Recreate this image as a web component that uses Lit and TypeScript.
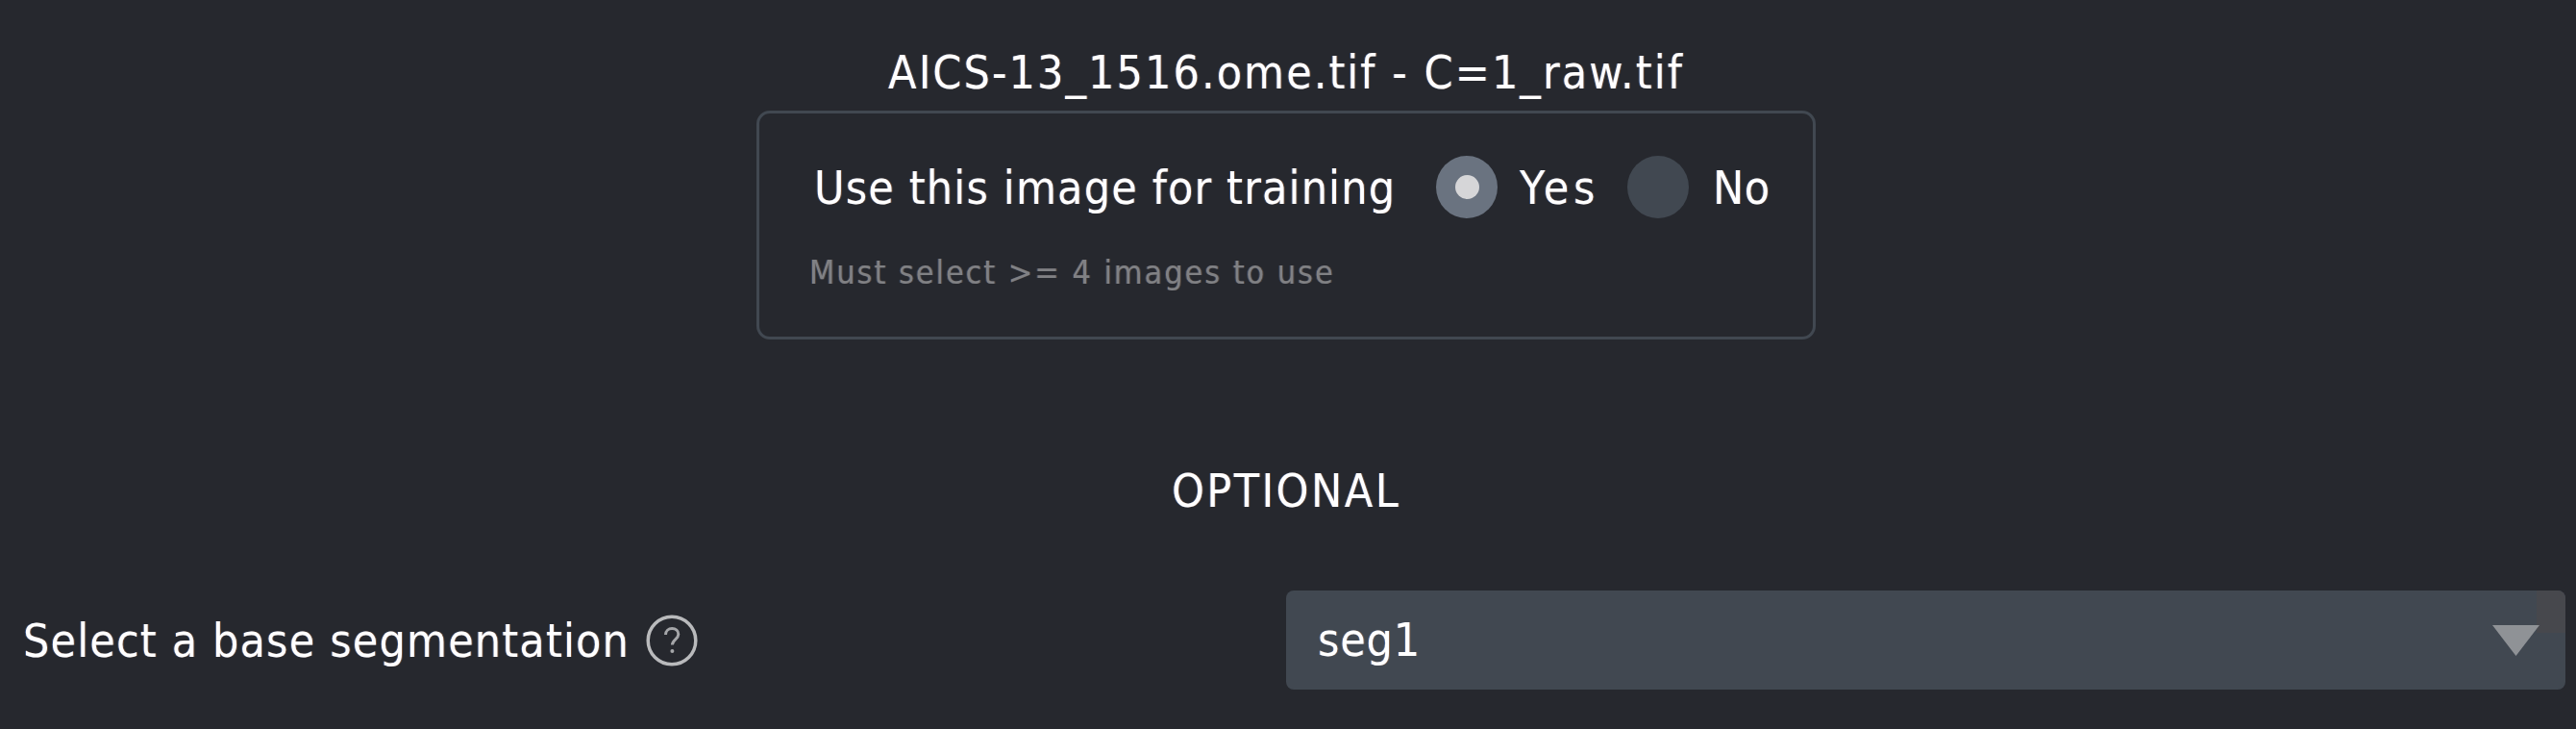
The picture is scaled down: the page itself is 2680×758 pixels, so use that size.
import { LitElement, html, css } from "lit";
import { customElement } from "lit/decorators.js";

@customElement("app-root")
export class AppRoot extends LitElement {
  static styles = css`
    :host {
      display: block;
      height: 758px;
      overflow: hidden;
      background: #26282e;
      color: #ffffff;
      font-family: "DejaVu Sans", "Noto Sans", sans-serif;
      font-stretch: condensed;
      font-size: 48px;
    }
    .txt {
      filter: blur(0.7px);
      white-space: nowrap;
      text-shadow: 1px 0 rgba(225, 140, 70, 0.4), -1px 0 rgba(80, 140, 240, 0.4);
    }
    .page { display: flex; flex-direction: column; height: 100%; box-sizing: border-box; padding-top: 43px; }
    .title { text-align: center; line-height: 64px; height: 72px; margin-right: 4px; letter-spacing: 2px; }
    .card {
      align-self: flex-start;
      margin-left: 787px;
      width: 1102px;
      height: 238px;
      box-sizing: border-box;
      border: 3px solid #414851;
      border-radius: 14px;
      padding: 44px 42px 0 57px;
    }
    .line { display: flex; align-items: center; height: 65px; }
    .question { width: 647px; letter-spacing: 1.1px; }
    .radio {
      width: 64px; height: 65px; border-radius: 50%;
      background: #414851;
      display: flex; align-items: center; justify-content: center;
      flex: none;
    }
    .radio.on { background: #6a7380; }
    .dot { width: 25px; height: 25px; border-radius: 50%; background: #d6d6d8; }
    .yes { margin-left: 23px; width: 112px; letter-spacing: 4.7px; }
    .no { margin-left: 25px; letter-spacing: 0.5px; }
    .hint {
      margin: 35px 0 0 -5px;
      font-size: 34px;
      line-height: 42px;
      color: #808184;
      letter-spacing: 1.9px;
      text-shadow: 1px 0 rgba(180, 130, 80, 0.3), -1px 0 rgba(80, 120, 190, 0.3);
    }
    .optional { margin-top: 129px; text-align: center; line-height: 56px; margin-right: 4px; letter-spacing: 2.4px; }
    .row { display: flex; align-items: center; margin-top: 76px; padding-left: 24px; padding-right: 11px; }
    .label { width: 648px; letter-spacing: 1.1px; }
    .help { width: 54px; height: 54px; display: block; flex: none; filter: blur(0.6px); }
    .select {
      position: relative;
      margin-left: auto;
      width: 1331px;
      height: 103px;
      box-sizing: border-box;
      background: #414851;
      border-radius: 8px;
      padding-left: 33px;
      line-height: 102px;
      display: block;
      letter-spacing: 0.75px;
    }
    .patch {
      position: absolute; top: 0; right: 0; width: 30px; height: 44px;
      background: #47484d; border-top-right-radius: 8px;
    }
    .arrow {
      position: absolute; left: 1255px; top: 36px; width: 49px; height: 32px; display: block;
    }
  `;

  render() {
    return html`
      <div class="page">
        <div class="title txt">AICS-13_1516.ome.tif - C=1_raw.tif</div>
        <div class="card">
          <div class="line">
            <span class="question txt">Use this image for training</span>
            <span class="radio on"><span class="dot"></span></span>
            <span class="yes txt">Yes</span>
            <span class="radio"></span>
            <span class="no txt">No</span>
          </div>
          <div class="hint txt">Must select &gt;= 4 images to use</div>
        </div>
        <div class="optional txt">OPTIONAL</div>
        <div class="row">
          <span class="label txt">Select a base segmentation</span>
          <svg class="help" viewBox="0 0 54 54" aria-hidden="true">
            <circle cx="27" cy="27" r="24.8" fill="none" stroke="#b9babc" stroke-width="3.5"></circle>
            <path d="M20.5 21c0-4 3-6.5 6.7-6.5s6.6 2.4 6.6 6c0 5-6.4 5.6-6.4 11" fill="none" stroke="#a5a6a9" stroke-width="3"></path>
            <circle cx="27.4" cy="38" r="2" fill="#a5a6a9"></circle>
          </svg>
          <div class="select">
            <span class="txt">seg1</span>
            <span class="patch"></span>
            <svg class="arrow" viewBox="0 0 49 32" aria-hidden="true">
              <path d="M0 0H49L24.5 32Z" fill="#8f9296"></path>
            </svg>
          </div>
        </div>
      </div>
    `;
  }
}
